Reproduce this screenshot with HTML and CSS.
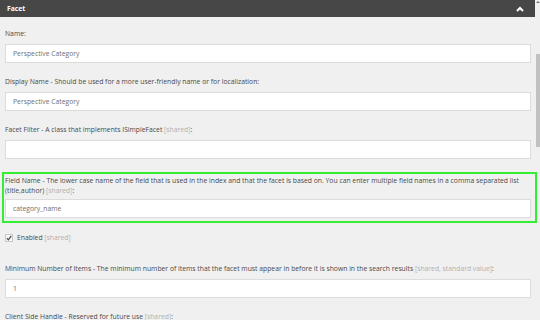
FILE: index.html
```html
<!DOCTYPE html>
<html lang="en">
<head>
    <meta charset="UTF-8" />
    <title>Facet</title>
    <link rel="stylesheet" href="styles.css">
</head>
<body>
    <div class="page">
        <div class="panel">
            <div class="panel-head">
                <span class="panel-title">Facet</span>
                <svg class="chevron" width="8" height="6" viewBox="0 0 8 6">
                    <path d="M1 5 L4 2 L7 5" fill="none" stroke="#fff" stroke-width="2"/>
                </svg>
            </div>

            <div class="fields">
                <div class="field">
                    <div class="label">Name:</div>
                    <div class="input">Perspective Category</div>
                </div>

                <div class="field">
                    <div class="label">Display Name - Should be used for a more user-friendly name or for localization:</div>
                    <div class="input">Perspective Category</div>
                </div>

                <div class="field">
                    <div class="label">Facet Filter - A class that implements ISimpleFacet <span class="shared">[shared]</span>:</div>
                    <div class="input"></div>
                </div>

                <!-- highlighted field -->
                <div class="field highlight">
                    <div class="label">Field Name - The lower case name of the field that is used in the index and that the facet is based on. You can enter multiple field names in a comma separated list (title,author) <span class="shared">[shared]</span>:</div>
                    <div class="input">category_name</div>
                </div>

                <div class="check-row">
                    <span class="checkbox">
                        <svg width="6" height="6" viewBox="0 0 6 6">
                            <path d="M0.8 3.2 L2.4 4.8 L5.2 1" fill="none" stroke="#555" stroke-width="1.3"/>
                        </svg>
                    </span>
                    <span class="label">Enabled <span class="shared">[shared]</span></span>
                </div>

                <div class="field">
                    <div class="label">Minimum Number of Items - The minimum number of items that the facet must appear in before it is shown in the search results <span class="shared">[shared, standard value]</span>:</div>
                    <div class="input">1</div>
                </div>

                <div class="field">
                    <div class="label">Client Side Handle - Reserved for future use <span class="shared">[shared]</span>:</div>
                </div>
            </div>
        </div>

        <div class="scrollbar">
            <div class="arrow"></div>
            <div class="thumb"></div>
        </div>
    </div>
</body>
</html>
```

FILE: styles.css
```css
body {
    margin: 0;
    background-color: #f0f0f0;
    font-family: "Open Sans", "DejaVu Sans", sans-serif;
    color: #4a4a4a;
    overflow: hidden;
}
.page {
    display: flex;
    height: 320px;
}
.panel {
    width: 535px;
}
.panel-head {
    height: 17px;
    background-color: #474747;
    display: flex;
    align-items: center;
    justify-content: space-between;
    padding: 0 11px 0 7px;
}
.panel-title {
    color: #fff;
    font-size: 6.8px;
    font-weight: bold;
}
.fields {
    padding: 12px 4px 0 5px;
}
.field {
    margin-bottom: 14px;
}
.label {
    font-size: 6.8px;
    line-height: 10px;
    margin-bottom: 5px;
}
.shared {
    color: #b0b0b0;
}
.input {
    height: 17px;
    background: #fff;
    border: 1px solid #dcdcdc;
    font-size: 6.8px;
    line-height: 17px;
    padding-left: 7px;
    color: #707070;
}
.highlight {
    position: relative;
    z-index: 1;
    border: 2px solid #33ee33;
    margin: -1px -6px 10px -3px;
    padding: 2px 4px 3px 1px;
}
.highlight .label {
    margin-bottom: 3px;
}
.check-row {
    display: flex;
    align-items: center;
    gap: 4px;
    margin-bottom: 21px;
}
.check-row .label {
    margin-bottom: 0;
}
.checkbox {
    width: 6px;
    height: 6px;
    border: 1px solid #c8c8c8;
    background: #f8f8f8;
    display: flex;
    align-items: center;
    justify-content: center;
}
.scrollbar {
    width: 5px;
    position: relative;
}
.arrow {
    margin: 1px auto 0;
    width: 0;
    height: 0;
    border-left: 2px solid transparent;
    border-right: 2px solid transparent;
    border-bottom: 2px solid #777;
}
.thumb {
    margin: 51px 0 0 1px;
    width: 4px;
    height: 93px;
    background: #c1c1c1;
}
```
